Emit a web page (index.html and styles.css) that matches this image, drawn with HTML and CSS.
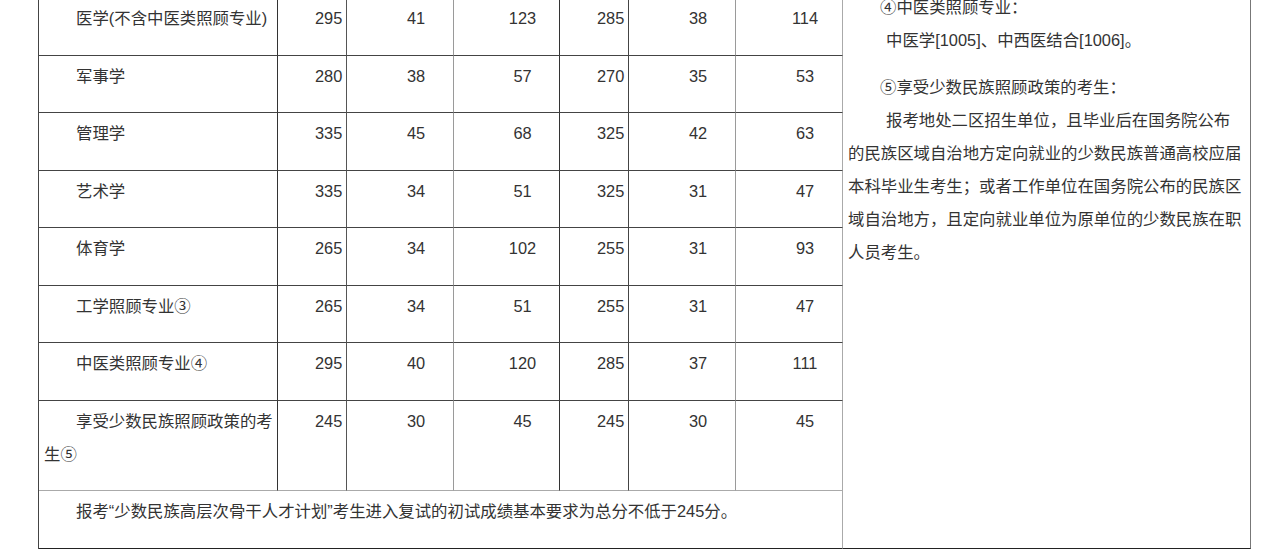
FILE: index.html
```html
<!DOCTYPE html>
<html lang="zh-CN">
<head>
<meta charset="utf-8">
<title>初试成绩基本要求</title>
<link rel="stylesheet" href="styles.css">
</head>
<body>
<div class="page">
<table class="score">
  <colgroup>
    <col class="c-name"><col class="c-narrow"><col class="c-wide"><col class="c-mid"><col class="c-narrow"><col class="c-wide"><col class="c-wide"><col class="c-note">
  </colgroup>
  <tbody>
    <tr>
      <td class="name">医学(不含中医类照顾专业)</td>
      <td class="num">295</td><td class="num">41</td><td class="num">123</td><td class="num">285</td><td class="num">38</td><td class="num">114</td>
      <td class="note" rowspan="9">
        <div class="note-body">
          <p class="lead">④中医类照顾专业：</p>
          <p class="body">中医学[1005]、中西医结合[1006]。</p>
          <p class="lead gap">⑤享受少数民族照顾政策的考生：</p>
          <p class="body">报考地处二区招生单位，且毕业后在国务院公布的民族区域自治地方定向就业的少数民族普通高校应届本科毕业生考生；或者工作单位在国务院公布的民族区域自治地方，且定向就业单位为原单位的少数民族在职人员考生。</p>
        </div>
      </td>
    </tr>
    <tr>
      <td class="name">军事学</td>
      <td class="num">280</td><td class="num">38</td><td class="num">57</td><td class="num">270</td><td class="num">35</td><td class="num">53</td>
    </tr>
    <tr>
      <td class="name">管理学</td>
      <td class="num">335</td><td class="num">45</td><td class="num">68</td><td class="num">325</td><td class="num">42</td><td class="num">63</td>
    </tr>
    <tr>
      <td class="name">艺术学</td>
      <td class="num">335</td><td class="num">34</td><td class="num">51</td><td class="num">325</td><td class="num">31</td><td class="num">47</td>
    </tr>
    <tr>
      <td class="name">体育学</td>
      <td class="num">265</td><td class="num">34</td><td class="num">102</td><td class="num">255</td><td class="num">31</td><td class="num">93</td>
    </tr>
    <tr>
      <td class="name">工学照顾专业③</td>
      <td class="num">265</td><td class="num">34</td><td class="num">51</td><td class="num">255</td><td class="num">31</td><td class="num">47</td>
    </tr>
    <tr>
      <td class="name">中医类照顾专业④</td>
      <td class="num">295</td><td class="num">40</td><td class="num">120</td><td class="num">285</td><td class="num">37</td><td class="num">111</td>
    </tr>
    <tr class="pre-last">
      <td class="name">享受少数民族照顾政策的考生⑤</td>
      <td class="num">245</td><td class="num">30</td><td class="num">45</td><td class="num">245</td><td class="num">30</td><td class="num">45</td>
    </tr>
    <tr class="last">
      <td class="name foot" colspan="7">报考“少数民族高层次骨干人才计划”考生进入复试的初试成绩基本要求为总分不低于245分。</td>
    </tr>
  </tbody>
</table>
</div>
</body>
</html>
```
FILE: styles.css
```css
html, body {
  margin: 0;
  padding: 0;
  background: #fff;
}
body {
  font-family: "Liberation Sans", "Noto Sans CJK SC", sans-serif;
  font-size: 16.4px;
  color: #333;
  overflow: hidden;
  height: 557px;
}
.page {
  padding-left: 38px;
}
.score {
  margin-top: -3px;
  border-collapse: separate;
  border-spacing: 0;
  table-layout: fixed;
  width: 1213px;
  border-left: 1px solid #444;
  border-top: 1px solid #444;
}
.c-name { width: 239px; }
.c-narrow { width: 69px; }
.c-wide { width: 107px; }
.c-mid { width: 106px; }
.c-note { width: 408px; }

.score td {
  box-sizing: border-box;
  vertical-align: top;
  line-height: 33px;
  border-right: 1px solid #444;
  border-bottom: 1px solid #444;
  padding: 4px 5px 19.5px 5px;
}
.score td.name {
  padding-left: 5px;
  padding-right: 3px;
  text-indent: 32px;
  text-align: left;
  border-right-color: #333;
}
.score td.num {
  text-align: center;
  text-indent: 32px;
}
.score tr > td.num:nth-child(2) { border-right-color: #555; }
.score tr > td.num:nth-child(3) { border-right-color: #9a9a9a; }
.score tr > td.num:nth-child(4) { border-right-color: #333; }
.score tr > td.num:nth-child(5) { border-right-color: #444; }
.score tr > td.num:nth-child(6) { border-right-color: #9a9a9a; }
.score tr > td.num:nth-child(7) { border-right-color: #aaa; }

.score td.foot {
  border-right-color: #aaa;
}
.score tr.pre-last td {
  border-bottom-color: #aaa;
}
.score tr.last td,
.score td.note {
  border-bottom-color: #222;
}
.score td.note {
  padding: 4px 4px 4px 5px;
  border-right-color: #777;
}
.note-body {
  margin-top: -11px;
}
.note-body p {
  margin: 0;
  line-height: 33px;
}
.note-body p.lead {
  text-indent: 32px;
}
.note-body p.body {
  text-indent: 38px;
}
.note-body p.gap {
  margin-top: 14px;
}
```
